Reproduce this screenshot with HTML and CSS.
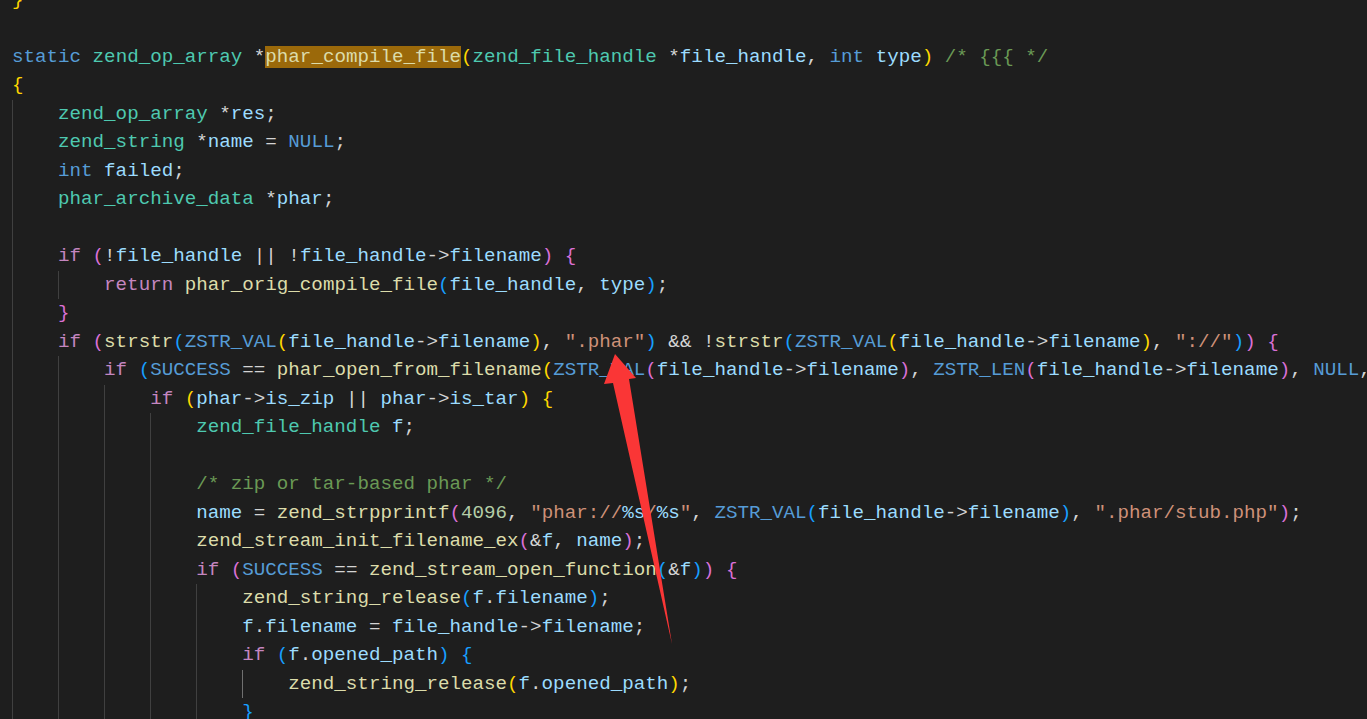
FILE: index.html
```html
<!DOCTYPE html>
<html lang="en">
<head>
  <meta charset="UTF-8" />
  <title>phar_compile_file</title>
  <link rel="stylesheet" href="styles.css">
</head>
<body>

<div class="code">
<div class="ln"><span class="b1">}</span></div>
<div class="ln"></div>
<div class="ln"><span class="k">static</span> <span class="t">zend_op_array</span> *<span class="hl f">phar_compile_file</span><span class="b1">(</span><span class="t">zend_file_handle</span> *<span class="v">file_handle</span>, <span class="k">int</span> <span class="v">type</span><span class="b1">)</span> <span class="m">/* {{{ */</span></div>
<div class="ln"><span class="b1">{</span></div>
<div class="ln"><span class="g"></span><span class="t">zend_op_array</span> *<span class="v">res</span>;</div>
<div class="ln"><span class="g"></span><span class="t">zend_string</span> *<span class="v">name</span> = <span class="k">NULL</span>;</div>
<div class="ln"><span class="g"></span><span class="k">int</span> <span class="v">failed</span>;</div>
<div class="ln"><span class="g"></span><span class="t">phar_archive_data</span> *<span class="v">phar</span>;</div>
<div class="ln"><span class="g"></span></div>
<div class="ln"><span class="g"></span><span class="c">if</span> <span class="b2">(</span>!<span class="v">file_handle</span> || !<span class="v">file_handle</span>-&gt;<span class="v">filename</span><span class="b2">)</span> <span class="b2">{</span></div>
<div class="ln"><span class="g"></span><span class="g"></span><span class="c">return</span> <span class="f">phar_orig_compile_file</span><span class="b3">(</span><span class="v">file_handle</span>, <span class="v">type</span><span class="b3">)</span>;</div>
<div class="ln"><span class="g"></span><span class="b2">}</span></div>
<div class="ln"><span class="g"></span><span class="c">if</span> <span class="b2">(</span><span class="f">strstr</span><span class="b3">(</span><span class="k">ZSTR_VAL</span><span class="b1">(</span><span class="v">file_handle</span>-&gt;<span class="v">filename</span><span class="b1">)</span>, <span class="s">".phar"</span><span class="b3">)</span> &amp;&amp; !<span class="f">strstr</span><span class="b3">(</span><span class="k">ZSTR_VAL</span><span class="b1">(</span><span class="v">file_handle</span>-&gt;<span class="v">filename</span><span class="b1">)</span>, <span class="s">"://"</span><span class="b3">)</span><span class="b2">)</span> <span class="b2">{</span></div>
<div class="ln"><span class="g"></span><span class="g"></span><span class="c">if</span> <span class="b3">(</span><span class="k">SUCCESS</span> == <span class="f">phar_open_from_filename</span><span class="b1">(</span><span class="k">ZSTR_VAL</span><span class="b2">(</span><span class="v">file_handle</span>-&gt;<span class="v">filename</span><span class="b2">)</span>, <span class="k">ZSTR_LEN</span><span class="b2">(</span><span class="v">file_handle</span>-&gt;<span class="v">filename</span><span class="b2">)</span>, <span class="k">NULL</span>, <span class="n">0</span>, <span class="n">0</span>, &amp;<span class="v">phar</span>, <span class="k">NULL</span><span class="b1">)</span><span class="b3">)</span> <span class="b3">{</span></div>
<div class="ln"><span class="g"></span><span class="g"></span><span class="g"></span><span class="c">if</span> <span class="b1">(</span><span class="v">phar</span>-&gt;<span class="v">is_zip</span> || <span class="v">phar</span>-&gt;<span class="v">is_tar</span><span class="b1">)</span> <span class="b1">{</span></div>
<div class="ln"><span class="g"></span><span class="g"></span><span class="g"></span><span class="g"></span><span class="t">zend_file_handle</span> <span class="v">f</span>;</div>
<div class="ln"><span class="g"></span><span class="g"></span><span class="g"></span><span class="g"></span></div>
<div class="ln"><span class="g"></span><span class="g"></span><span class="g"></span><span class="g"></span><span class="m">/* zip or tar-based phar */</span></div>
<div class="ln"><span class="g"></span><span class="g"></span><span class="g"></span><span class="g"></span><span class="v">name</span> = <span class="f">zend_strpprintf</span><span class="b2">(</span><span class="n">4096</span>, <span class="s">"phar://<span class="v">%s</span>/<span class="v">%s</span>"</span>, <span class="k">ZSTR_VAL</span><span class="b3">(</span><span class="v">file_handle</span>-&gt;<span class="v">filename</span><span class="b3">)</span>, <span class="s">".phar/stub.php"</span><span class="b2">)</span>;</div>
<div class="ln"><span class="g"></span><span class="g"></span><span class="g"></span><span class="g"></span><span class="f">zend_stream_init_filename_ex</span><span class="b2">(</span>&amp;<span class="v">f</span>, <span class="v">name</span><span class="b2">)</span>;</div>
<div class="ln"><span class="g"></span><span class="g"></span><span class="g"></span><span class="g"></span><span class="c">if</span> <span class="b2">(</span><span class="k">SUCCESS</span> == <span class="f">zend_stream_open_function</span><span class="b3">(</span>&amp;<span class="v">f</span><span class="b3">)</span><span class="b2">)</span> <span class="b2">{</span></div>
<div class="ln"><span class="g"></span><span class="g"></span><span class="g"></span><span class="g"></span><span class="g"></span><span class="f">zend_string_release</span><span class="b3">(</span><span class="v">f</span>.<span class="v">filename</span><span class="b3">)</span>;</div>
<div class="ln"><span class="g"></span><span class="g"></span><span class="g"></span><span class="g"></span><span class="g"></span><span class="v">f</span>.<span class="v">filename</span> = <span class="v">file_handle</span>-&gt;<span class="v">filename</span>;</div>
<div class="ln"><span class="g"></span><span class="g"></span><span class="g"></span><span class="g"></span><span class="g"></span><span class="c">if</span> <span class="b3">(</span><span class="v">f</span>.<span class="v">opened_path</span><span class="b3">)</span> <span class="b3">{</span></div>
<div class="ln"><span class="g"></span><span class="g"></span><span class="g"></span><span class="g"></span><span class="g"></span><span class="g active"></span><span class="f">zend_string_release</span><span class="b1">(</span><span class="v">f</span>.<span class="v">opened_path</span><span class="b1">)</span>;</div>
<div class="ln"><span class="g"></span><span class="g"></span><span class="g"></span><span class="g"></span><span class="g"></span><span class="b3">}</span></div>
</div>

<!-- red arrow annotation -->
<svg class="arrow" width="1367" height="719" viewBox="0 0 1367 719">
  <polygon points="615,354 636,378 629,379 672,644 613,383 604,384" fill="#fa3636"/>
</svg>

</body>
</html>
```

FILE: styles.css
```css
html, body { margin: 0; padding: 0; height: 100%; background-color: #1e1e1e; overflow: hidden; }
body { position: relative; }
.code { margin-top: -14.5px; padding-left: 12px; font-family: "Liberation Mono", "DejaVu Sans Mono", monospace; font-size: 19.2px; line-height: 28.5px; color: #d4d4d4; }
.ln { height: 28.5px; white-space: pre; }
.g { display: inline-block; width: 4ch; height: 28.5px; vertical-align: top; border-left: 1px solid #404040; box-sizing: border-box; }
.g.active { border-left-color: #707070; }

/* token colours */
.k { color: #569cd6; }
.c { color: #c586c0; }
.t { color: #4ec9b0; }
.v { color: #9cdcfe; }
.f { color: #dcdcaa; }
.s { color: #ce9178; }
.m { color: #6a9955; }
.n { color: #b5cea8; }
.b1 { color: #ffd700; }
.b2 { color: #da70d6; }
.b3 { color: #179fff; }
.hl { background-color: #9b690a; }

.arrow { position: absolute; left: 0; top: 0; pointer-events: none; }
```
